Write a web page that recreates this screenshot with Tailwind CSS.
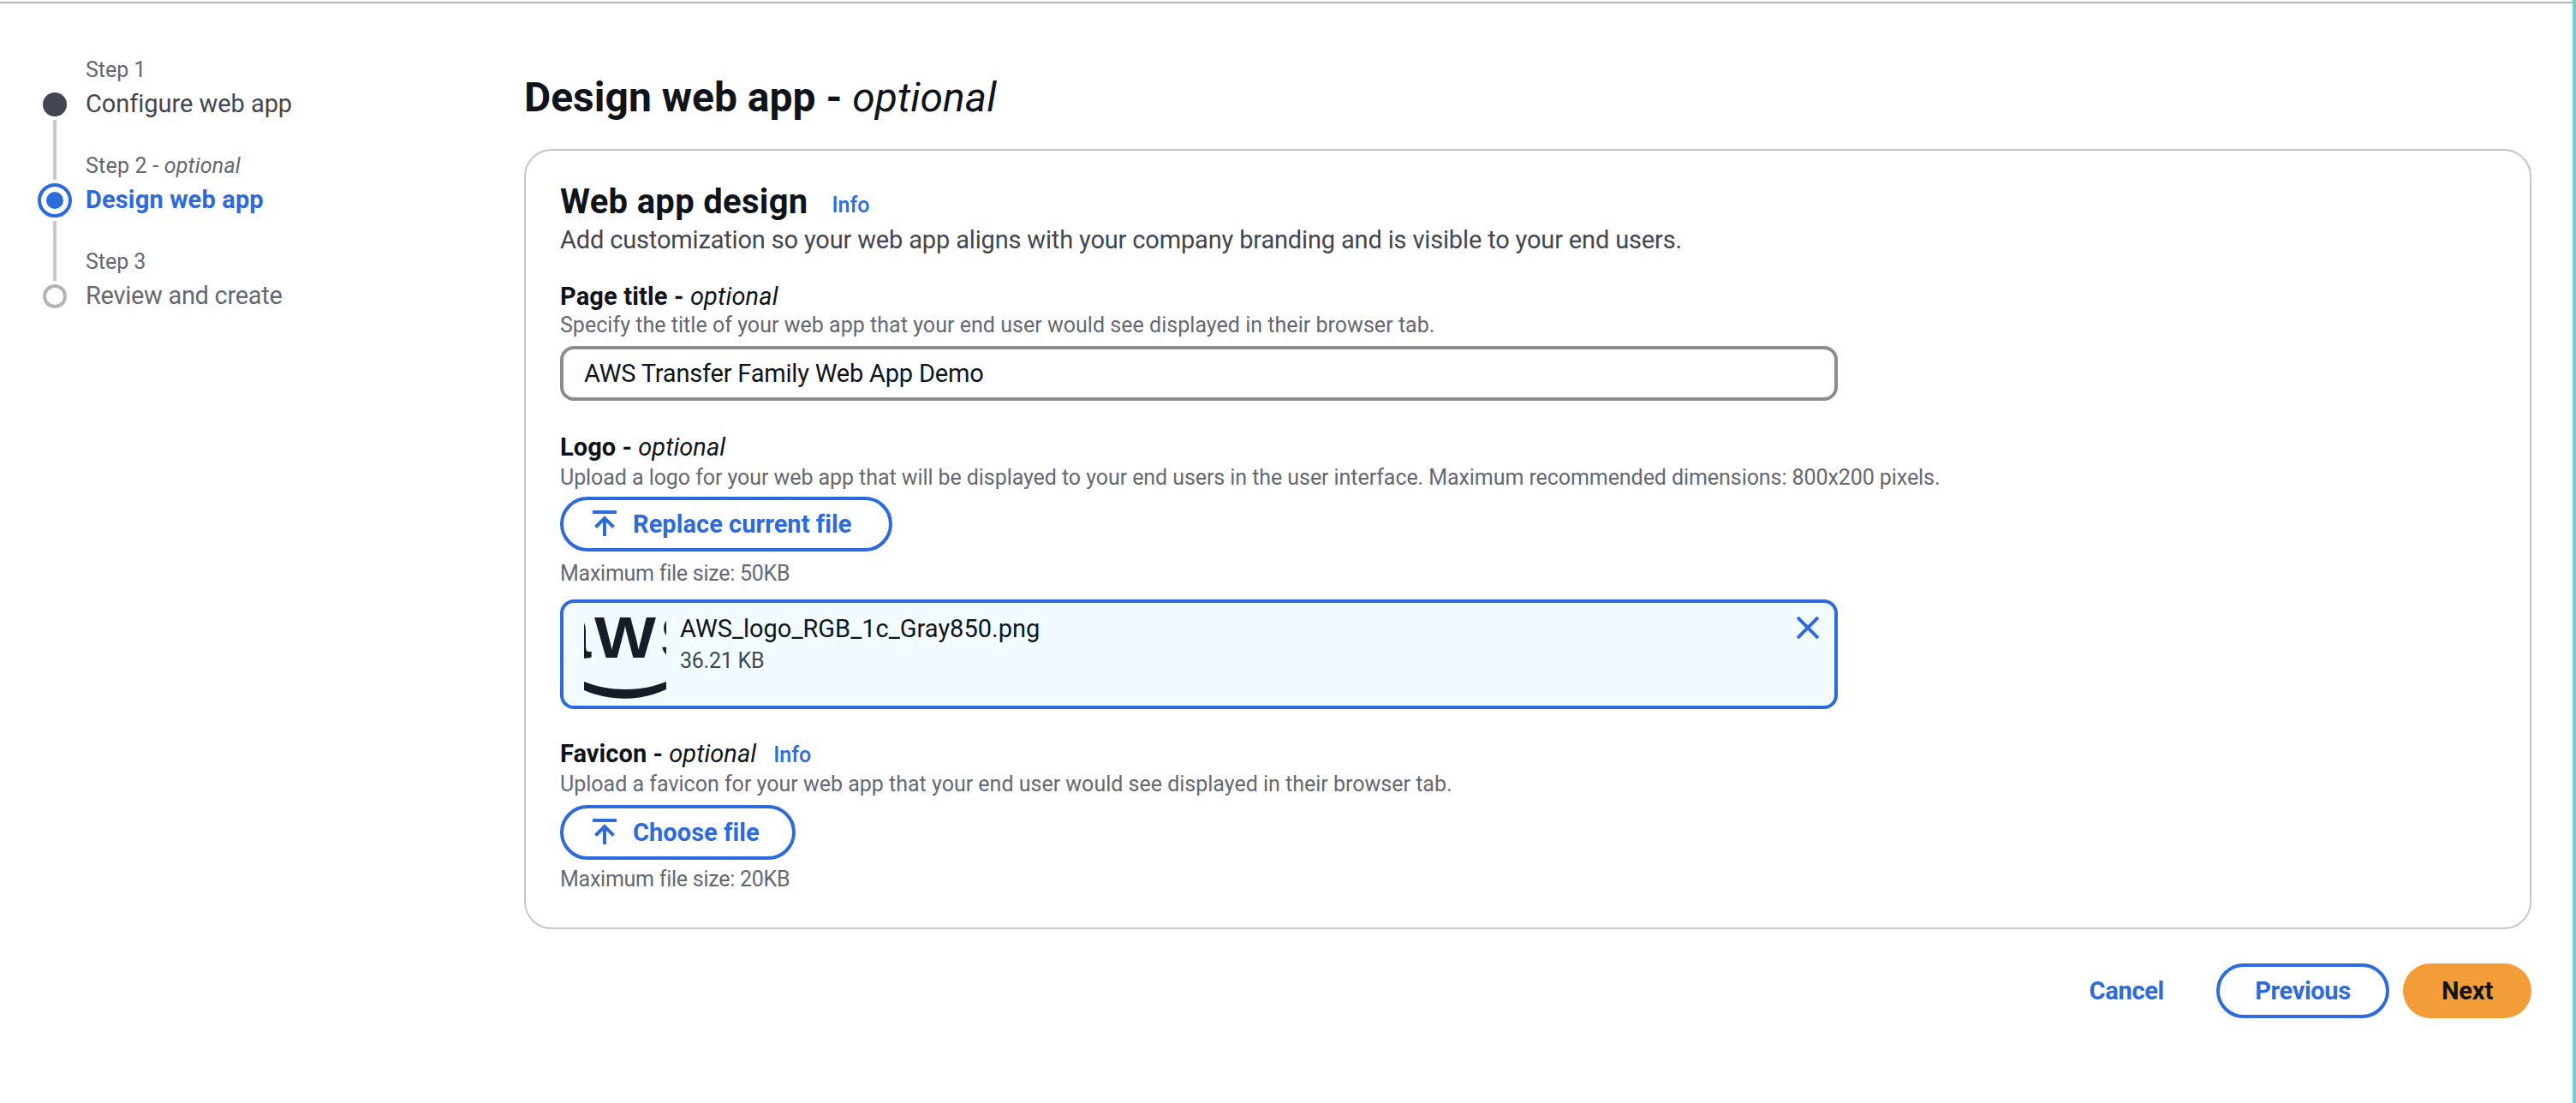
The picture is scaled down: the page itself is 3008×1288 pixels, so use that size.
<!DOCTYPE html>
<html lang="en">
<head>
    <meta charset="UTF-8">
    <title>Design web app</title>
    <script src="https://cdn.jsdelivr.net/npm/@tailwindcss/browser@4"></script>
</head>
<body class="bg-white font-['Roboto',sans-serif] text-[#0f141a]">
<div class="flex h-[1288px] w-[3008px] overflow-hidden">
    <div class="w-[3004px]">
        <div class="mt-[2px] h-[2px] bg-[#b4b4bb]"></div>
        <div class="flex">
            <!-- Steps -->
            <div class="flex w-[612px] pl-[44px] gap-[16px]">
                <div class="flex w-[40px] flex-col items-center gap-[4px] pt-[104px]">
                    <div class="h-[28px] w-[28px] rounded-full bg-[#424650]"></div>
                    <div class="h-[70px] w-[4px] bg-[#c6c6cd]"></div>
                    <div class="flex h-[40px] w-[40px] items-center justify-center rounded-full border-[4px] border-[#2d6adb]">
                        <div class="h-[20px] w-[20px] rounded-full bg-[#2d6adb]"></div>
                    </div>
                    <div class="h-[70px] w-[4px] bg-[#c6c6cd]"></div>
                    <div class="h-[28px] w-[28px] rounded-full border-[4px] border-[#b4b4bb]"></div>
                </div>
                <div class="pt-[62px]">
                    <div class="h-[35px] text-[25px] leading-[32px] tracking-[-0.05px] text-[#656871]">Step 1</div>
                    <div class="mb-[37px] h-[40px] text-[29px] leading-[40px] tracking-[-0.05px] text-[#424650]">Configure web app</div>
                    <div class="h-[35px] text-[25px] leading-[32px] tracking-[0.2px] text-[#656871]">Step 2 - <i>optional</i></div>
                    <div class="mb-[37px] h-[40px] text-[29px] font-bold leading-[40px] tracking-[0.15px] text-[#2d6adb]">Design web app</div>
                    <div class="h-[35px] text-[25px] leading-[32px] tracking-[-0.05px] text-[#656871]">Step 3</div>
                    <div class="h-[40px] text-[29px] leading-[40px] tracking-[-0.3px] text-[#656871]">Review and create</div>
                </div>
            </div>
            <!-- Main -->
            <div class="w-[2344px]">
                <h1 class="mt-[82px] h-[56px] text-[48px] font-bold leading-[56px]">Design web app - <i class="font-normal">optional</i></h1>
                <div class="mt-[32px] h-[911px] rounded-[32px] border-[2px] border-[#c6c6cd] px-[40px] pt-[36px]">
                    <div class="flex h-[48px] items-baseline gap-[28px]">
                        <h2 class="text-[40px] font-bold leading-[48px] tracking-[0.3px]">Web app design</h2>
                        <a class="-translate-y-[1px] text-[25px] font-medium text-[#2d6adb]">Info</a>
                    </div>
                    <p class="h-[40px] text-[29px] leading-[40px] tracking-[-0.16px] text-[#424650]">Add customization so your web app aligns with your company branding and is visible to your end users.</p>

                    <div class="mt-[26px] h-[38px] text-[29px] font-bold leading-[40px] tracking-[0.15px]">Page title - <i class="font-normal">optional</i></div>
                    <p class="h-[32px] text-[25px] leading-[32px] tracking-[0.03px] text-[#656871]">Specify the title of your web app that your end user would see displayed in their browser tab.</p>
                    <div class="mt-[8px] flex h-[64px] w-[1492px] items-center rounded-[16px] border-[4px] border-[#8c8c94] pl-[24px] pt-[2px] text-[29px] tracking-[-0.2px]">AWS Transfer Family Web App Demo</div>

                    <div class="mt-[34px] h-[40px] text-[29px] font-bold leading-[40px] tracking-[0.05px]">Logo - <i class="font-normal">optional</i></div>
                    <p class="h-[32px] text-[25px] leading-[32px] tracking-[-0.07px] text-[#656871]">Upload a logo for your web app that will be displayed to your end users in the user interface. Maximum recommended dimensions: 800x200 pixels.</p>
                    <div class="mt-[6px] flex h-[64px] w-[388px] items-center gap-[19px] rounded-full border-[4px] border-[#2d6adb] pl-[34px] text-[29px] font-bold tracking-[0.05px] text-[#2d6adb]">
                        <svg class="h-[32px] w-[28px]" viewBox="0 0 28 32" fill="none" stroke="currentColor" stroke-width="4"><path d="M0 2h28M14 30V10M3.5 19.5L14 9l10.5 10.5"/></svg>
                        <span class="pt-[2px]">Replace current file</span>
                    </div>
                    <p class="mt-[10px] h-[32px] text-[25px] leading-[32px] tracking-[-0.25px] text-[#656871]">Maximum file size: 50KB</p>
                    <div class="mt-[14px] flex h-[128px] w-[1492px] rounded-[16px] border-[4px] border-[#2d6adb] bg-[#f2fbff] pl-[24px] pt-[16px]">
                        <svg class="h-[96px] w-[96px]" viewBox="0 0 96 96" fill="#161d26">
                            <text x="-42" y="48" font-family="Liberation Sans" font-weight="700" font-size="90">a</text>
                            <text x="12" y="48" font-family="Liberation Sans" font-weight="700" font-size="68" textLength="72" lengthAdjust="spacingAndGlyphs">W</text>
                            <text x="88" y="48" font-family="Liberation Sans" font-weight="700" font-size="90">s</text>
                            <path d="M0 76C30 88 66 88 96 76V85C66 99 30 99 0 86Z"/>
                        </svg>
                        <div class="ml-[16px] -mt-[6px]">
                            <div class="h-[40px] text-[29px] leading-[40px] tracking-[0px]">AWS_logo_RGB_1c_Gray850.png</div>
                            <div class="h-[36px] text-[25px] leading-[36px] tracking-[-0.25px] text-[#424650]">36.21 KB</div>
                        </div>
                        <svg class="ml-auto mr-[18px] h-[26px] w-[26px]" viewBox="0 0 26 26" fill="none" stroke="#2d6adb" stroke-width="4"><path d="M1 1l24 24M25 1L1 25"/></svg>
                    </div>

                    <div class="mt-[32px] flex h-[40px] items-baseline gap-[20px]">
                        <div class="text-[29px] font-bold leading-[40px] tracking-[0.05px]">Favicon - <i class="font-normal">optional</i></div>
                        <a class="text-[25px] font-medium text-[#2d6adb]">Info</a>
                    </div>
                    <p class="h-[32px] text-[25px] leading-[32px] tracking-[0px] text-[#656871]">Upload a favicon for your web app that your end user would see displayed in their browser tab.</p>
                    <div class="mt-[8px] flex h-[64px] w-[275px] items-center gap-[19px] rounded-full border-[4px] border-[#2d6adb] pl-[34px] text-[29px] font-bold tracking-[0.05px] text-[#2d6adb]">
                        <svg class="h-[32px] w-[28px]" viewBox="0 0 28 32" fill="none" stroke="currentColor" stroke-width="4"><path d="M0 2h28M14 30V10M3.5 19.5L14 9l10.5 10.5"/></svg>
                        <span class="pt-[2px]">Choose file</span>
                    </div>
                    <p class="mt-[7px] h-[32px] text-[25px] leading-[32px] tracking-[-0.25px] text-[#656871]">Maximum file size: 20KB</p>
                </div>
                <div class="mt-[40px] flex items-center justify-end text-[29px] font-bold">
                    <a class="mr-[61px] pt-[2px] tracking-[-0.3px] text-[#2d6adb]">Cancel</a>
                    <div class="flex h-[64px] w-[202px] items-center justify-center rounded-full border-[4px] border-[#2d6adb] pt-[2px] tracking-[-0.35px] text-[#2d6adb]">Previous</div>
                    <div class="ml-[16px] flex h-[64px] w-[150px] items-center justify-center rounded-full bg-[#f29d38] pt-[2px] tracking-[-0.15px]">Next</div>
                </div>
            </div>
        </div>
    </div>
    <div class="h-[1288px] w-[4px] bg-[#7accc8]"></div>
</div>
</body>
</html>
